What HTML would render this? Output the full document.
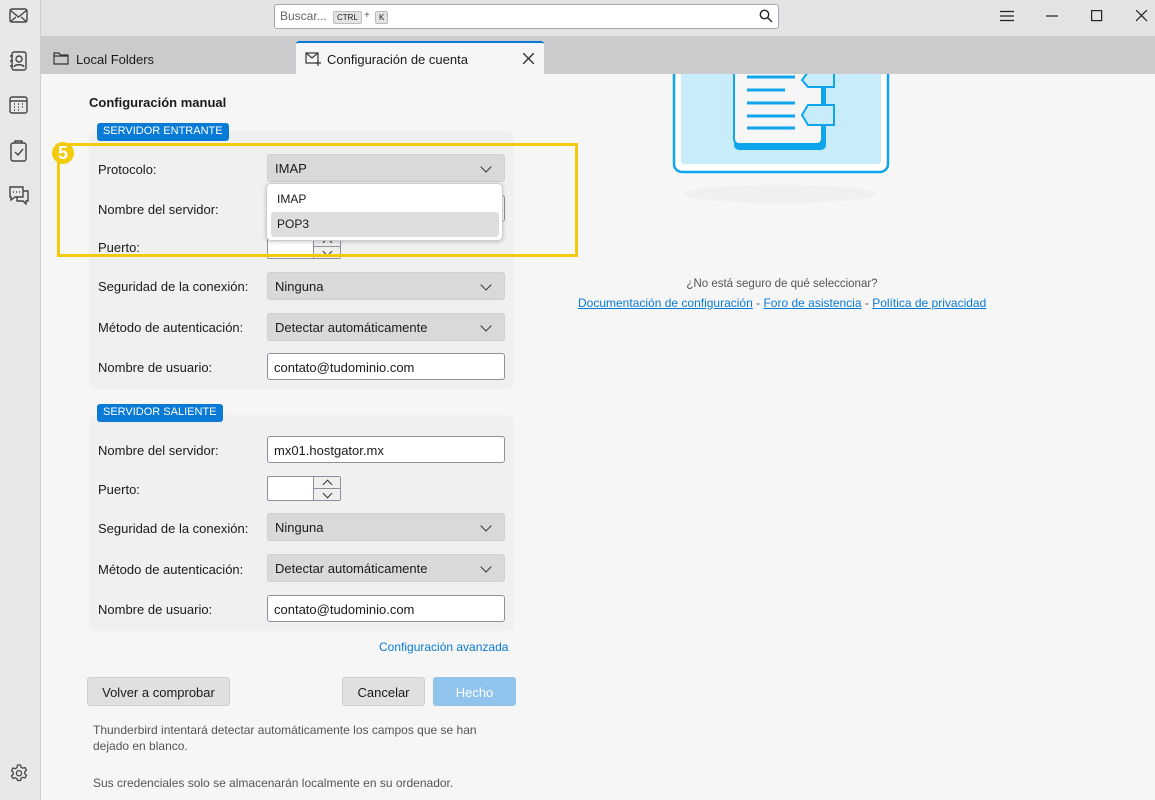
<!DOCTYPE html>
<html><head><meta charset="utf-8"><style>
*{box-sizing:border-box;margin:0;padding:0}
body{width:1155px;height:800px;overflow:hidden;font-family:"Liberation Sans",sans-serif;font-size:13px;color:#1a1a1a;background:#f6f6f6;position:relative}
.a{position:absolute}
.side{left:0;top:0;width:41px;height:800px;background:#e8e8e8;border-right:1px solid #cfcfcf}
.top{left:41px;top:0;width:1114px;height:37px;background:#e3e3e6;border-bottom:1px solid #cdcdcd}
.tabs{left:41px;top:37px;width:1114px;height:37px;background:#cbcbcd}
.lbl{left:98px;font-size:13px;color:#1a1a1a}
.sel{left:267px;width:238px;height:28px;background:#d9d9d9;border:1px solid #cfcfcf;border-radius:3px;padding:6px 7px;font-size:13px}
.sel:after{content:"";position:absolute;right:14px;top:8px;width:7px;height:7px;border-right:1.3px solid #333;border-bottom:1.3px solid #333;transform:rotate(45deg)}
.inp{left:267px;width:238px;height:27px;background:#fff;border:1px solid #8f8f9d;border-radius:3px;padding:6px 6px;font-size:13px}
.spin{left:267px;width:74px;height:25px;background:#fff;border:1px solid #8f8f9d;border-radius:2px}
.spin i{position:absolute;left:45px;width:27px;height:12px;background:#efefef;border-left:1px solid #8f8f9d}
.spin i:after{content:"";position:absolute;left:10px;width:6px;height:6px;border-right:1.2px solid #333;border-bottom:1.2px solid #333}
.spin i.u:after{top:4px;transform:rotate(-135deg)}
.spin i.d{border-top:1px solid #8f8f9d}
.spin i.d:after{top:1px;transform:rotate(45deg)}
.panel{left:89px;width:425px;background:#f0f0f0;border-radius:6px}
.badge{background:#0a7ad7;color:#fff;font-size:11px;padding:2px 6px;border-radius:3px;height:18px}
.btn{top:677px;height:29px;background:#e0e0e0;border:1px solid #cfcfcf;border-radius:3px;text-align:center;padding-top:7px;font-size:13px}
a{color:#0a7ad7;text-decoration:underline}
</style></head><body>
<div class="a side">
<svg class="a" style="left:9px;top:7px" width="20" height="18" viewBox="0 0 20 18" fill="none" stroke="#444" stroke-width="1.4"><rect x="1" y="2" width="17" height="13" rx="2"/><path d="M1 3l8.5 7L18 3M1 15l6-5M18 15l-6-5"/></svg>
<svg class="a" style="left:9px;top:51px" width="20" height="20" viewBox="0 0 20 20" fill="none" stroke="#444" stroke-width="1.4"><rect x="3" y="1" width="14" height="18" rx="2"/><circle cx="10" cy="8" r="3"/><path d="M5 16c1-3 9-3 10 0M1 5h3M1 10h3M1 15h3"/></svg>
<svg class="a" style="left:9px;top:96px" width="20" height="18" viewBox="0 0 20 18" fill="none" stroke="#444" stroke-width="1.4"><rect x="1" y="1" width="17" height="16" rx="2"/><path d="M1 5h17"/><path d="M5 8h1M9 8h1M13 8h1M5 11h1M9 11h1M13 11h1M5 14h1M9 14h1" stroke-width="1.6"/></svg>
<svg class="a" style="left:10px;top:140px" width="18" height="22" viewBox="0 0 18 22" fill="none" stroke="#444" stroke-width="1.4"><rect x="1" y="3" width="15" height="18" rx="2"/><path d="M5 3V1h7v2M5 12l3 3 5-6"/></svg>
<svg class="a" style="left:8px;top:185px" width="22" height="20" viewBox="0 0 22 20" fill="none" stroke="#444" stroke-width="1.4"><path d="M2 2h13v10H7l-4 3v-3H2z"/><path d="M15 6h5v10h-2v3l-3-3h-6v-4"/><path d="M5 7h1M8 7h1M11 7h1" stroke-width="1.6"/></svg>
<svg class="a" style="left:10px;top:764px" width="18" height="18" viewBox="0 0 18 18" fill="none" stroke="#444" stroke-width="1.3"><path d="M7.5 1h3l.5 2.2 1.8 1 2.2-.7 1.5 2.6-1.7 1.6v2.1l1.7 1.6-1.5 2.6-2.2-.7-1.8 1-.5 2.2h-3L7 14.8l-1.8-1-2.2.7L1.5 11.9 3.2 10.3V8.2L1.5 6.6 3 4l2.2.7 1.8-1z"/><circle cx="9" cy="9.2" r="2.6"/></svg>
</div>
<div class="a top"></div>
<div class="a" style="left:274px;top:4px;width:505px;height:25px;background:#fff;border:1px solid #a9a9ad;border-radius:3px"></div>
<div class="a" style="left:280px;top:9px;font-size:12px;color:#666">Buscar...</div>
<div class="a" style="left:333px;top:11px;font-size:8px;background:#e3e3e3;border:1px solid #bbb;border-radius:2px;padding:1px 3px">CTRL</div>
<div class="a" style="left:364px;top:10px;font-size:10px;color:#555">+</div>
<div class="a" style="left:375px;top:11px;font-size:8px;background:#e3e3e3;border:1px solid #bbb;border-radius:2px;padding:1px 3px">K</div>
<svg class="a" style="left:759px;top:9px" width="14" height="14" viewBox="0 0 14 14" fill="none" stroke="#222" stroke-width="1.4"><circle cx="5.5" cy="5.5" r="4.2"/><path d="M8.5 8.5l4.5 4.5"/></svg>
<svg class="a" style="left:1000px;top:10px" width="14" height="12" stroke="#222" stroke-width="1.2"><path d="M0 1.5h14M0 6h14M0 10.5h14"/></svg>
<svg class="a" style="left:1046px;top:15px" width="12" height="2" stroke="#222" stroke-width="1.2"><path d="M0 1h12"/></svg>
<svg class="a" style="left:1091px;top:10px" width="12" height="12" fill="none" stroke="#222" stroke-width="1.2"><rect x=".6" y=".6" width="10" height="10"/></svg>
<svg class="a" style="left:1136px;top:10px" width="12" height="12" stroke="#222" stroke-width="1.2"><path d="M0 0l11 11M11 0L0 11"/></svg>
<div class="a tabs"></div>
<svg class="a" style="left:53px;top:52px" width="16" height="13" fill="none" stroke="#333" stroke-width="1.2"><path d="M1 1h5l1.5 2H15v9H1z M1 4h14"/></svg>
<div class="a" style="left:76px;top:52px">Local Folders</div>
<div class="a" style="left:296px;top:41px;width:248px;height:33px;background:#f6f6f6;border-top:2px solid #0a7ad7;border-radius:3px 3px 0 0"></div>
<svg class="a" style="left:305px;top:52px" width="16" height="14" fill="none" stroke="#333" stroke-width="1.2"><rect x="1" y="1" width="12" height="10"/><path d="M1 1l6 5 6-5M13 8v6M10 11h6"/></svg>
<div class="a" style="left:327px;top:52px">Configuración de cuenta</div>
<svg class="a" style="left:523px;top:53px" width="11" height="11" stroke="#333" stroke-width="1.4"><path d="M0 0l11 11M11 0L0 11"/></svg>

<svg class="a" style="left:670px;top:74px" width="220" height="130" viewBox="0 0 220 130">
<ellipse cx="110" cy="120" rx="96" ry="9" fill="#f0f0f0"/>
<rect x="4" y="-20" width="214" height="118" rx="8" fill="#fff" stroke="#0ea5ec" stroke-width="2.5"/>
<rect x="11" y="-20" width="200" height="110" rx="3" fill="#c9ecfb"/>
<rect x="64" y="-20" width="92" height="96" rx="5" fill="#0ea5ec"/>
<rect x="64" y="-20" width="88" height="90" rx="5" fill="#f6f6f6" stroke="#0ea5ec" stroke-width="2"/>
<path d="M77 3h48M77 16h38M77 29h48M77 42h48M77 54h48" stroke="#0ea5ec" stroke-width="3"/>
<path d="M138 -2h26v15h-26l-6-7z M138 31h26v20h-26l-6-10z" fill="#c9ecfb" stroke="#0ea5ec" stroke-width="2"/>
</svg>
<div class="a" style="left:682px;width:200px;top:278px;text-align:center;font-size:11.5px;color:#555">¿No está seguro de qué seleccionar?</div>
<div class="a" style="left:578px;top:296px;font-size:12px;color:#555;white-space:nowrap"><a>Documentación de configuración</a> - <a>Foro de asistencia</a> - <a>Política de privacidad</a></div>

<div class="a" style="left:89px;top:95px;font-weight:bold;font-size:13px">Configuración manual</div>
<div class="a panel" style="top:131px;height:258px"></div>
<div class="a badge" style="left:97px;top:123px">SERVIDOR ENTRANTE</div>
<div class="a lbl" style="top:162px">Protocolo:</div><div class="a sel" style="top:154px">IMAP</div>
<div class="a lbl" style="top:202px">Nombre del servidor:</div><div class="a inp" style="top:195px"></div>
<div class="a lbl" style="top:240px">Puerto:</div><div class="a spin" style="top:234px"><i class="u" style="top:0"></i><i class="d" style="top:11px"></i></div>
<div class="a lbl" style="top:279px">Seguridad de la conexión:</div><div class="a sel" style="top:272px">Ninguna</div>
<div class="a lbl" style="top:320px">Método de autenticación:</div><div class="a sel" style="top:313px">Detectar automáticamente</div>
<div class="a lbl" style="top:360px">Nombre de usuario:</div><div class="a inp" style="top:353px">contato@tudominio.com</div>

<div class="a" style="left:266px;top:183px;width:237px;height:58px;background:#fff;border:1px solid #ccc;border-radius:5px;box-shadow:0 1px 4px rgba(0,0,0,.2)"></div>
<div class="a" style="left:277px;top:192px;font-size:12px">IMAP</div>
<div class="a" style="left:271px;top:212px;width:228px;height:25px;background:#dedede;border-radius:3px;padding:5px 6px;font-size:12px">POP3</div>

<div class="a" style="left:57px;top:143px;width:521px;height:114px;border:3px solid #f2cc0c"></div>
<div class="a" style="left:52px;top:142px;width:22px;height:22px;border-radius:50%;background:#f2cc0c;color:#fff;font-weight:bold;font-size:18px;text-align:center;line-height:22px">5</div>

<div class="a panel" style="top:415px;height:216px"></div>
<div class="a badge" style="left:97px;top:404px">SERVIDOR SALIENTE</div>
<div class="a lbl" style="top:443px">Nombre del servidor:</div><div class="a inp" style="top:436px">mx01.hostgator.mx</div>
<div class="a lbl" style="top:482px">Puerto:</div><div class="a spin" style="top:476px"><i class="u" style="top:0"></i><i class="d" style="top:11px"></i></div>
<div class="a lbl" style="top:521px">Seguridad de la conexión:</div><div class="a sel" style="top:513px">Ninguna</div>
<div class="a lbl" style="top:562px">Método de autenticación:</div><div class="a sel" style="top:554px">Detectar automáticamente</div>
<div class="a lbl" style="top:602px">Nombre de usuario:</div><div class="a inp" style="top:595px">contato@tudominio.com</div>
<div class="a" style="left:379px;top:640px;font-size:12px;color:#0a7ad7">Configuración avanzada</div>
<div class="a btn" style="left:87px;width:143px">Volver a comprobar</div>
<div class="a btn" style="left:342px;width:83px">Cancelar</div>
<div class="a btn" style="left:433px;width:83px;background:#90c4ec;border-color:#90c4ec;color:#fff">Hecho</div>
<div class="a" style="left:93px;top:722px;font-size:12px;color:#555;line-height:16px">Thunderbird intentará detectar automáticamente los campos que se han<br>dejado en blanco.</div>
<div class="a" style="left:93px;top:776px;font-size:12px;color:#555">Sus credenciales solo se almacenarán localmente en su ordenador.</div>
</body></html>
